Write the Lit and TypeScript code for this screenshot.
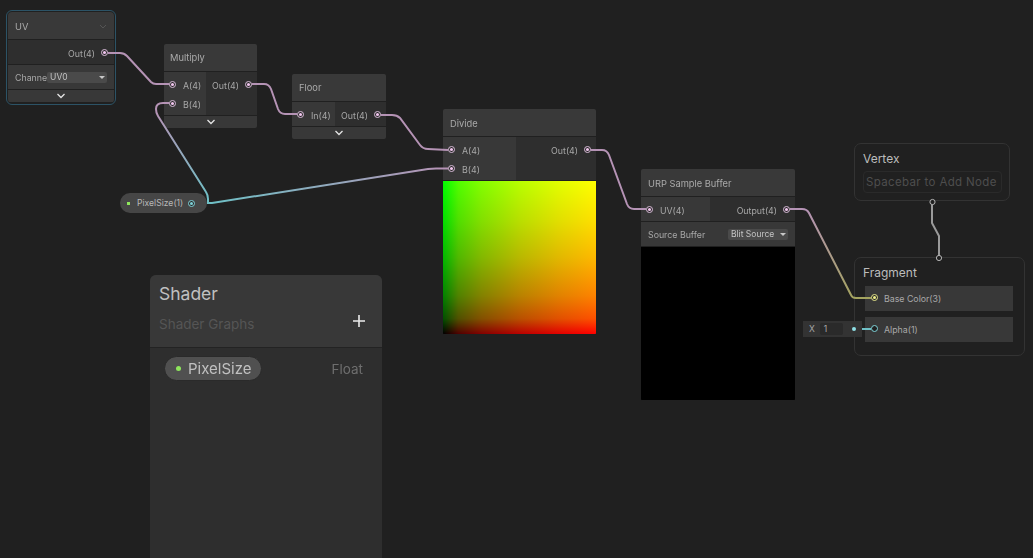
import { LitElement, html, css, svg } from "lit";
import { customElement } from "lit/decorators.js";

const PINK = "#b593b5";
const CYAN = "#6fc0c6";

const ramp = (id: string, a: string, b: string, x1: number, y1: number, x2: number, y2: number) => svg`
  <linearGradient id=${id} gradientUnits="userSpaceOnUse" x1=${x1} y1=${y1} x2=${x2} y2=${y2}>
    <stop offset="0" stop-color=${a}></stop>
    <stop offset="1" stop-color=${b}></stop>
  </linearGradient>`;

@customElement("app-root")
export class AppRoot extends LitElement {
  static styles = css`
    :host { display: block; width: 1033px; height: 558px; }
    .canvas {
      position: relative; width: 1033px; height: 558px; overflow: hidden;
      background: #202020; font-family: Inter, "Liberation Sans", sans-serif;
      color: #a8a8a8; font-size: 8.8px;
    }
    .wires { position: absolute; left: 0; top: 0; width: 1033px; height: 558px; pointer-events: none; }
    .node {
      position: absolute; display: flex; flex-direction: column;
      background: #202020; overflow: hidden; border-radius: 2px;
    }
    .node.sel { border-radius: 4px; }
    .title {
      height: 27px; background: #393939; display: flex; align-items: center; justify-content: space-between;
      padding: 1px 7px 0; box-sizing: border-box; font-size: 9.3px; color: #aaa; margin-bottom: 1px; flex: none;
    }
    .title.up { padding-top: 0; }
    .title.tight { padding-left: 6px; }
    .ports { display: flex; flex: none; min-height: 24px; }
    .in, .out { display: flex; flex-direction: column; padding: 4px 0 1px; box-sizing: border-box; }
    .in { background: #383838; flex: none; }
    .out { background: #2e2e2e; flex: 1; align-items: flex-end; }
    .port { height: 19px; display: flex; align-items: center; gap: 7px; white-space: nowrap; }
    .in .port { padding-left: 5px; }
    .out .port { padding-right: 5px; gap: 6px; }
    .sel .out .port { padding-right: 6px; }
    .dot {
      width: 7px; height: 7px; border-radius: 50%; box-sizing: border-box; flex: none;
      border: 1px solid #d9bcd9; background: #2a2a2a; display: flex; align-items: center; justify-content: center;
      margin-top: -3px;
    }
    .dot::after { content: ""; width: 3px; height: 3px; border-radius: 50%; background: #f3c6f0; }
    .dot.y { border-color: #e6e68c; }
    .dot.y::after { background: #f2f28a; }
    .dot.c { border-color: #7fd2d8; }
    .dot.c::after { background: #7fd2d8; }
    .collapse {
      height: 12px; background: #383838; margin-top: 1px; display: flex; align-items: center; justify-content: center; flex: none;
    }
    .collapse svg { display: block; }
    .prop {
      height: 24px; background: #383838; margin-top: 1px; display: flex; align-items: center;
      justify-content: space-between; padding: 0 7px; flex: none; white-space: nowrap;
    }
    .select {
      background: #4a4a4a; color: #c4c4c4; height: 11px; border-radius: 2px; display: flex; align-items: center;
      justify-content: space-between; gap: 4px; padding: 0 2px 0 3px; font-size: 8.5px; box-sizing: border-box; width: 60px;
    }
    .caret { width: 0; height: 0; border-left: 3px solid transparent; border-right: 3px solid transparent; border-top: 3px solid #c8c8c8; flex: none; }
    .preview { flex: none; margin-top: 1px; height: 153px; }
    .black { background: #000; }
    .uvmap {
      position: relative;
      background: linear-gradient(to top, rgb(0,0,0) 0%, rgb(0,80,0) 10%, rgb(0,130,0) 25%, rgb(0,184,0) 50%, rgb(0,224,0) 75%, rgb(0,255,0) 100%);
    }
    .uvmap::after {
      content: ""; position: absolute; inset: 0; mix-blend-mode: screen;
      background: linear-gradient(to right, rgb(0,0,0) 0%, rgb(80,0,0) 10%, rgb(130,0,0) 25%, rgb(184,0,0) 50%, rgb(224,0,0) 75%, rgb(255,0,0) 100%);
    }
    .select-ring {
      position: absolute; left: 6px; top: 10px; width: 110px; height: 95px; box-sizing: border-box;
      border: 1px solid #2c5366; border-radius: 6px;
    }
    .pill {
      position: absolute; left: 120px; top: 193px; width: 87px; height: 20px; border-radius: 10px; box-sizing: border-box;
      background: #464646; display: flex; align-items: center; padding: 0 12px 0 7px; font-size: 8.6px; color: #b8b8b8;
    }
    .pill .sq { width: 3px; height: 3px; background: #8ee65c; margin-right: 7px; flex: none; }
    .pill .nm { flex: 1; white-space: nowrap; }
    .pill .dot { margin-top: 0; }
    .block {
      position: absolute; box-sizing: border-box; border: 1px solid #333; border-radius: 7px; background: #202020;
    }
    .vertex { left: 854px; top: 143px; width: 156px; height: 58px; padding: 7px 8px 0; }
    .fragment { left: 854px; top: 257px; width: 171px; height: 99px; padding: 7px 11px 0 10px; }
    .block h3 { margin: 0; font-weight: 400; font-size: 12px; line-height: 16px; color: #bcbcbc; }
    .vertex h3 { margin-bottom: 4px; }
    .fragment h3 { margin-left: -2px; margin-bottom: 5px; }
    .placeholder {
      height: 22px; border: 1px solid #2a2a2a; border-radius: 4px; box-sizing: border-box; font-size: 11.5px; color: #4e4e4e;
      display: flex; align-items: center; padding-left: 2px; white-space: nowrap; letter-spacing: 0.35px; width: 139px;
    }
    .slot {
      height: 25px; background: #383838; display: flex; align-items: center; padding-left: 6px; gap: 6px; margin-bottom: 6px; font-size: 8.8px;
    }
    .slot .dot { margin-top: -2px; }
    .ring { background: #202020; }
    .ring::after { display: none; }
    .inline {
      position: absolute; left: 803px; top: 321px; width: 59px; height: 16px; background: #333; display: flex; align-items: center;
      padding-left: 6px; box-sizing: border-box; gap: 5px; font-size: 8.5px; color: #a8a8a8;
    }
    .inline .field { width: 23px; height: 12px; background: #2a2a2a; border-radius: 2px; display: flex; align-items: center; padding-left: 4px; box-sizing: border-box; }
    .inline .pt { width: 4px; height: 4px; border-radius: 50%; background: #8fe0e6; margin-left: 4px; }
    .panel {
      position: absolute; left: 150px; top: 275px; width: 232px; height: 283px; background: #2e2e2e; border-radius: 6px 6px 0 0;
      display: flex; flex-direction: column; overflow: hidden;
    }
    .phead {
      height: 73px; background: #383838; border-bottom: 1px solid #232323; box-sizing: border-box; padding: 9px 9px 0; flex: none;
      display: flex; flex-direction: column;
    }
    .phead .h { font-size: 17.5px; line-height: 20px; color: #c0c0c0; }
    .phead .sub { display: flex; justify-content: space-between; align-items: center; margin-top: 11px; padding-right: 8px; font-size: 13.5px; color: #555; }
    .phead .sub svg { margin-bottom: 5px; }
    .pbody { display: flex; align-items: center; justify-content: space-between; padding: 8px 19px 0 15px; }
    .chip {
      height: 25px; width: 98px; margin-left: -1px; box-sizing: border-box; border: 1px solid #2a2a2a; border-radius: 13px; background: #505050;
      display: flex; align-items: center; padding-left: 11px; gap: 7px; font-size: 15px; color: #c0c0c0;
    }
    .chip i { width: 5px; height: 5px; border-radius: 50%; background: #8ee65c; flex: none; }
    .ftype { font-size: 13.5px; color: #6e6e6e; }
  `;

  private chev() {
    return html`<svg width="10" height="6" viewBox="0 0 10 6"><path d="M1.5 1 L5 4.5 L8.5 1" fill="none" stroke="#e4e4e4" stroke-width="1.3"></path></svg>`;
  }

  private pos(x: number, y: number, w: number, h: number) {
    return `left:${x}px;top:${y}px;width:${w}px;height:${h}px`;
  }

  render() {
    return html`
      <div class="canvas">
        <div class="select-ring"></div>

        <div class="node sel" style=${this.pos(8, 12, 106, 91)}>
          <div class="title"><span>UV</span>
            <svg width="8" height="5" viewBox="0 0 8 5"><path d="M1 1 L4 4 L7 1" fill="none" stroke="#555" stroke-width="1"></path></svg>
          </div>
          <div class="ports"><div class="out"><div class="port">Out(4)<span class="dot"></span></div></div></div>
          <div class="prop">
            <span>Channe</span>
            <div class="select"><span>UV0</span><span class="caret"></span></div>
          </div>
          <div class="collapse">${this.chev()}</div>
        </div>

        <div class="node" style=${this.pos(164, 44, 93, 84)}>
          <div class="title up tight">Multiply</div>
          <div class="ports">
            <div class="in" style="width:42px"><div class="port"><span class="dot"></span>A(4)</div><div class="port"><span class="dot"></span>B(4)</div></div>
            <div class="out"><div class="port">Out(4)<span class="dot"></span></div></div>
          </div>
          <div class="collapse">${this.chev()}</div>
        </div>

        <div class="node" style=${this.pos(292, 74, 94, 65)}>
          <div class="title up">Floor</div>
          <div class="ports">
            <div class="in" style="width:43px"><div class="port"><span class="dot"></span>In(4)</div></div>
            <div class="out"><div class="port">Out(4)<span class="dot"></span></div></div>
          </div>
          <div class="collapse">${this.chev()}</div>
        </div>

        <div class="node" style=${this.pos(443, 109, 153, 226)}>
          <div class="title">Divide</div>
          <div class="ports">
            <div class="in" style="width:73px"><div class="port"><span class="dot"></span>A(4)</div><div class="port"><span class="dot"></span>B(4)</div></div>
            <div class="out"><div class="port">Out(4)<span class="dot"></span></div></div>
          </div>
          <div class="preview uvmap"></div>
        </div>

        <div class="node" style=${this.pos(641, 169, 154, 232)}>
          <div class="title">URP Sample Buffer</div>
          <div class="ports">
            <div class="in" style="width:69px"><div class="port"><span class="dot"></span>UV(4)</div></div>
            <div class="out"><div class="port">Output(4)<span class="dot"></span></div></div>
          </div>
          <div class="prop">
            <span>Source Buffer</span>
            <div class="select"><span>Blit Source</span><span class="caret"></span></div>
          </div>
          <div class="preview black"></div>
        </div>

        <div class="block vertex">
          <h3>Vertex</h3>
          <div class="placeholder">Spacebar to Add Node</div>
        </div>
        <div class="block fragment">
          <h3>Fragment</h3>
          <div class="slot"><span class="dot y"></span>Base Color(3)</div>
          <div class="slot"><span class="dot c ring"></span>Alpha(1)</div>
        </div>

        <div class="inline"><span>X</span><div class="field">1</div><span class="pt"></span></div>

        <div class="pill"><span class="sq"></span><span class="nm">PixelSize(1)</span><span class="dot c"></span></div>

        <div class="panel">
          <div class="phead">
            <div class="h">Shader</div>
            <div class="sub"><span>Shader Graphs</span>
              <svg width="12" height="12" viewBox="0 0 12 12"><path d="M6 0 V12 M0 6 H12" stroke="#ececec" stroke-width="1.6"></path></svg>
            </div>
          </div>
          <div class="pbody">
            <div class="chip"><i></i>PixelSize</div>
            <span class="ftype">Float</span>
          </div>
        </div>

        <svg class="wires" viewBox="0 0 1033 558" fill="none" stroke-width="2">
          <defs>
            ${ramp("g1", PINK, "#a3a35f", 805, 209, 856, 298)}
            ${ramp("g2", PINK, CYAN, 160, 110, 208, 200)}
            ${ramp("g3", CYAN, PINK, 212, 203, 443, 168)}
          </defs>
          <path d="M108 53 L120 53 Q124 53 127 56 L151 82 Q153 84 156 84 L169 84" stroke=${PINK}></path>
          <path d="M252 84 L264 84 Q269 84 271 89 L278 109 Q280 114 285 114 L297 114" stroke=${PINK}></path>
          <path d="M381 115 L392 115 Q397 115 400 118 L420 145 Q423 149 428 149 L448 150" stroke=${PINK}></path>
          <path d="M591 150 L602 150 Q607 150 609 155 L627 204 Q629 209 634 209 L646 209" stroke=${PINK}></path>
          <path d="M790 209 L802 209 Q807 209 809 213 L851 295 Q852 298 856 298 L871 298" stroke="url(#g1)"></path>
          <path d="M169 103 L163 103 Q156 103 156 109 Q156 113 158 116 L206 192 Q208 195 208 199 L208 203" stroke="url(#g2)"></path>
          <path d="M207 203 L212 203 L428 169 Q432 168.5 436 168.5 L448 168.5" stroke="url(#g3)"></path>
          <path d="M862 329 L871 329" stroke=${CYAN}></path>
          <path d="M932 202 V223 L939 236 V258" stroke="#9a9a9a"></path>
          <circle cx="932.5" cy="202" r="2.6" fill="#202020" stroke="#b4b4b4" stroke-width="1"></circle>
          <circle cx="939" cy="258" r="2.6" fill="#202020" stroke="#b4b4b4" stroke-width="1"></circle>
        </svg>
      </div>
    `;
  }
}
